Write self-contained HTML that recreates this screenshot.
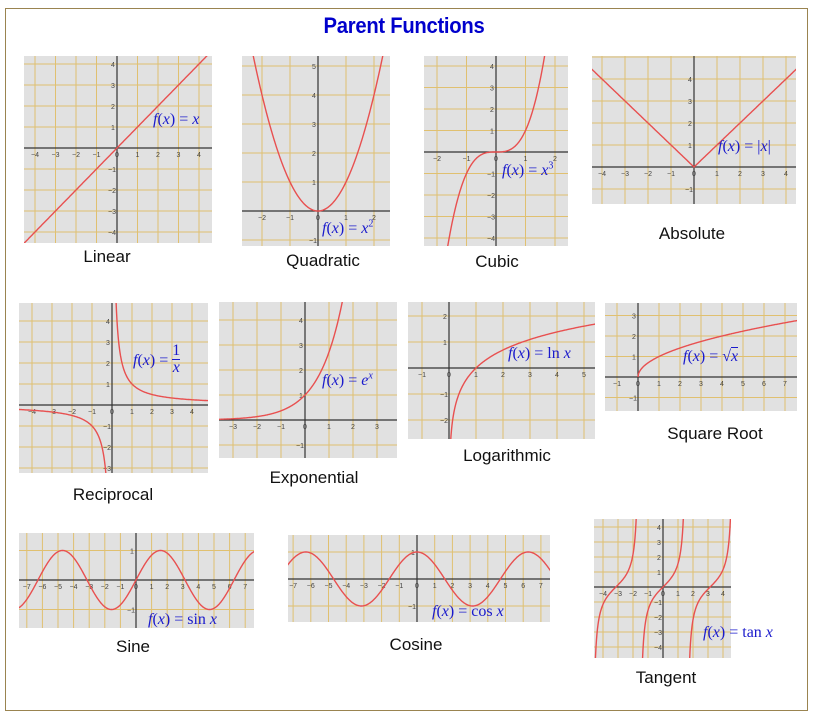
<!DOCTYPE html>
<html><head><meta charset="utf-8"><style>
html,body{margin:0;width:816px;height:715px;overflow:hidden}
body{background:#fff;position:relative;font-family:"Liberation Sans",sans-serif}
#frame{position:absolute;left:5px;top:8px;width:803px;height:703px;border:1px solid #9a8450;box-sizing:border-box}
h1{position:absolute;left:100px;width:608px;top:13px;margin:0;text-align:center;font-size:22px;font-weight:bold;color:#0000cc;transform:scaleX(0.92);letter-spacing:-0.3px}
.cap{position:absolute;font-size:17px;color:#111;transform:translateX(-50%);white-space:nowrap}
.f{position:absolute;font-family:"Liberation Serif",serif;font-size:16px;color:#1a1acc;white-space:nowrap;line-height:18px}
.f i{font-style:italic}
sup{line-height:0}
svg{position:absolute;left:0;top:0}
</style></head><body>
<div id="frame"></div>
<h1>Parent Functions</h1>
<svg id="s" width="816" height="715"></svg>
<div class="cap" style="left:107px;top:247px">Linear</div>
<div class="cap" style="left:323px;top:251px">Quadratic</div>
<div class="cap" style="left:497px;top:252px">Cubic</div>
<div class="cap" style="left:692px;top:224px">Absolute</div>
<div class="cap" style="left:113px;top:485px">Reciprocal</div>
<div class="cap" style="left:314px;top:468px">Exponential</div>
<div class="cap" style="left:507px;top:446px">Logarithmic</div>
<div class="cap" style="left:715px;top:424px">Square Root</div>
<div class="cap" style="left:133px;top:637px">Sine</div>
<div class="cap" style="left:416px;top:635px">Cosine</div>
<div class="cap" style="left:666px;top:668px">Tangent</div>

<div class="f" style="left:153px;top:111px"><i>f</i>(<i>x</i>) = <i>x</i></div>
<div class="f" style="left:322px;top:220px"><i>f</i>(<i>x</i>) = <i>x</i><sup style="font-size:10px">2</sup></div>
<div class="f" style="left:502px;top:162px"><i>f</i>(<i>x</i>) = <i>x</i><sup style="font-size:10px">3</sup></div>
<div class="f" style="left:718px;top:138px"><i>f</i>(<i>x</i>) = |<i>x</i>|</div>
<div class="f" style="left:133px;top:345px"><i>f</i>(<i>x</i>) = <span style="display:inline-block;vertical-align:middle;text-align:center;line-height:16px;position:relative;top:-2px"><span style="display:block;border-bottom:1px solid #1a1acc">1</span><i>x</i></span></div>
<div class="f" style="left:322px;top:372px"><i>f</i>(<i>x</i>) = <i>e</i><sup style="font-size:10px"><i>x</i></sup></div>
<div class="f" style="left:508px;top:345px"><i>f</i>(<i>x</i>) = ln <i>x</i></div>
<div class="f" style="left:683px;top:348px"><i>f</i>(<i>x</i>) = √<span style="border-top:1px solid #1a1acc"><i>x</i></span></div>
<div class="f" style="left:148px;top:611px"><i>f</i>(<i>x</i>) = sin <i>x</i></div>
<div class="f" style="left:432px;top:603px"><i>f</i>(<i>x</i>) = cos <i>x</i></div>
<div class="f" style="left:703px;top:624px"><i>f</i>(<i>x</i>) = tan <i>x</i></div>

<script>
var G=[
[24,56,188,187,117,148,20.5,21,function(x){return x}],
[242,56,148,190,318,211,28,29,function(x){return x*x}],
[424,56,144,190,496,152,29.5,21.5,function(x){return x*x*x}],
[592,56,204,148,694,167,23,22,function(x){return Math.abs(x)}],
[19,303,189,170,112,405,20,21,function(x){return 1/x}],
[219,302,178,156,305,420,24,25,function(x){return Math.exp(x)}],
[408,302,187,137,449,368,27,26,function(x){return x>0?Math.log(x):NaN}],
[605,303,192,108,638,377,21,20.5,function(x){return x>=0?Math.sqrt(x):NaN}],
[19,533,235,95,136,580,15.6,29.5,function(x){return Math.sin(x)}],
[288,535,262,87,417,579,17.7,27,function(x){return Math.cos(x)}],
[594,519,137,139,663,587,15,15,function(x){return Math.tan(x)}]
];
var s=document.getElementById('s'),h='';
G.forEach(function(g,i){
var X=g[0],Y=g[1],W=g[2],H=g[3],ox=g[4],oy=g[5],ux=g[6],uy=g[7],f=g[8];
h+='<clipPath id="c'+i+'"><rect x="'+X+'" y="'+Y+'" width="'+W+'" height="'+H+'"/></clipPath><g clip-path="url(#c'+i+')">';
h+='<rect x="'+X+'" y="'+Y+'" width="'+W+'" height="'+H+'" fill="#e1e1e1"/>';
for(var k=-20;k<=20;k++){var px=ox+k*ux;if(px>X&&px<X+W&&k)h+='<line x1="'+px+'" y1="'+Y+'" x2="'+px+'" y2="'+(Y+H)+'" stroke="#e0c070" stroke-width="1"/>';
var py=oy-k*uy;if(py>Y&&py<Y+H&&k)h+='<line x1="'+X+'" y1="'+py+'" x2="'+(X+W)+'" y2="'+py+'" stroke="#e0c070" stroke-width="1"/>';}
h+='<line x1="'+X+'" y1="'+oy+'" x2="'+(X+W)+'" y2="'+oy+'" stroke="#333" stroke-width="1.2"/>';
h+='<line x1="'+ox+'" y1="'+Y+'" x2="'+ox+'" y2="'+(Y+H)+'" stroke="#333" stroke-width="1.2"/>';
for(k=-20;k<=20;k++){var px=ox+k*ux;if(px>X+4&&px<X+W-4)h+='<text x="'+(px-(k<0?4:2))+'" y="'+(oy+9)+'" font-size="7" fill="#444" font-family="Liberation Sans">'+(k<0?'−'+(-k):k)+'</text>';
var py=oy-k*uy;if(py>Y+5&&py<Y+H-3&&k)h+='<text x="'+(ox-(k<0?9:6))+'" y="'+(py+3)+'" font-size="7" fill="#444" font-family="Liberation Sans">'+(k<0?'−'+(-k):k)+'</text>';}
var d='',pen=false,prev=null;
for(var px=X-2;px<=X+W+2;px+=0.5){var x=(px-ox)/ux,y=f(x);
if(!isFinite(y)){pen=false;prev=null;continue;}
var py=oy-y*uy;if(py<Y-300)py=Y-300;if(py>Y+H+300)py=Y+H+300;
if(prev!==null&&Math.abs(py-prev)>H)pen=false;
d+=(pen?'L':'M')+px.toFixed(1)+' '+py.toFixed(1);pen=true;prev=py;}
h+='<path d="'+d+'" fill="none" stroke="#e85050" stroke-width="1.4"/></g>';
});
s.innerHTML=h;
</script>
</body></html>
